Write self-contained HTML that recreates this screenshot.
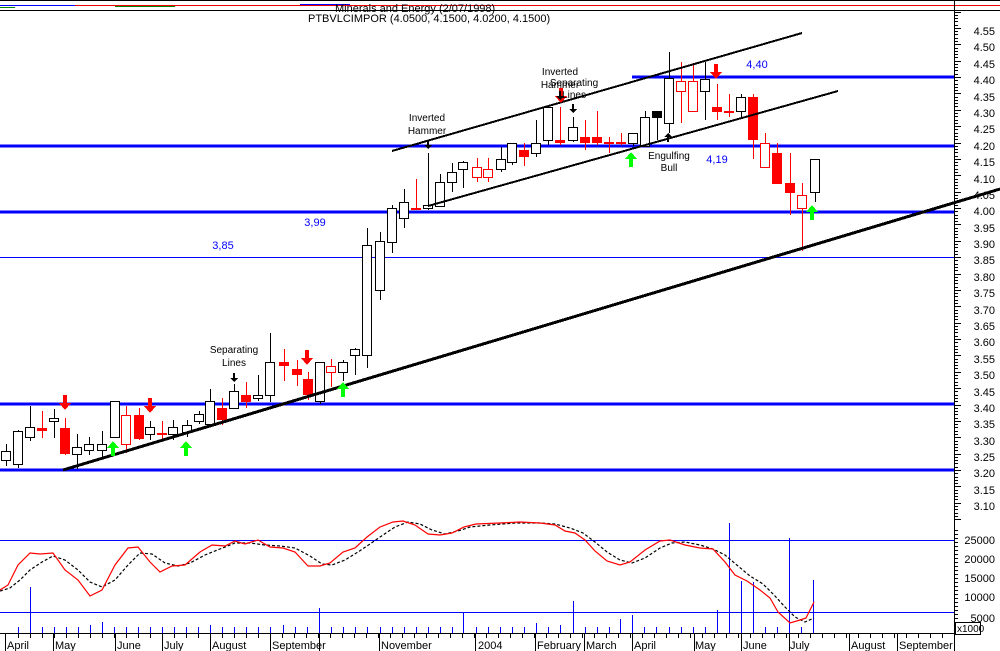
<!DOCTYPE html>
<html><head><meta charset="utf-8"><style>
html,body{margin:0;padding:0;background:#fff;}
svg{display:block;font-family:"Liberation Sans",Arial,sans-serif;}
</style></head><body>
<svg id="s" width="1000" height="651" viewBox="0 0 1000 651" xmlns="http://www.w3.org/2000/svg" shape-rendering="crispEdges">
<rect width="1000" height="651" fill="#fff"/>
<!-- header lines -->
<line x1="0" y1="0.5" x2="1000" y2="0.5" stroke="#000"/>
<line x1="0" y1="5.5" x2="1000" y2="5.5" stroke="#e00"/>
<line x1="0" y1="5.5" x2="75" y2="5.5" stroke="#00f"/>
<line x1="0" y1="7.5" x2="15" y2="7.5" stroke="#080"/>
<line x1="115" y1="6.5" x2="175" y2="6.5" stroke="#080"/>
<line x1="300" y1="4.5" x2="350" y2="4.5" stroke="#00f"/>
<line x1="0" y1="10.5" x2="1000" y2="10.5" stroke="#000"/>
<text x="335" y="12" font-size="11" fill="#000">Minerals and Energy (2/07/1998)</text>
<text x="308" y="22" font-size="11" fill="#000">PTBVLCIMPOR (4.0500, 4.1500, 4.0200, 4.1500)</text>
<g id="g"></g>
<!-- right axis -->
<line x1="954.5" y1="0" x2="954.5" y2="651" stroke="#000"/>
<g font-size="11" fill="#000" text-anchor="end">
<text x="995" y="35">4.55</text><text x="995" y="51">4.50</text><text x="995" y="68">4.45</text><text x="995" y="84">4.40</text><text x="995" y="101">4.35</text><text x="995" y="117">4.30</text><text x="995" y="133">4.25</text><text x="995" y="150">4.20</text><text x="995" y="166">4.15</text><text x="995" y="183">4.10</text><text x="995" y="199">4.05</text><text x="995" y="215">4.00</text><text x="995" y="232">3.95</text><text x="995" y="248">3.90</text><text x="995" y="264">3.85</text><text x="995" y="281">3.80</text><text x="995" y="297">3.75</text><text x="995" y="314">3.70</text><text x="995" y="330">3.65</text><text x="995" y="346">3.60</text><text x="995" y="363">3.55</text><text x="995" y="379">3.50</text><text x="995" y="396">3.45</text><text x="995" y="412">3.40</text><text x="995" y="428">3.35</text><text x="995" y="445">3.30</text><text x="995" y="461">3.25</text><text x="995" y="477">3.20</text><text x="995" y="494">3.15</text><text x="995" y="510">3.10</text>
<text x="995" y="544">25000</text><text x="995" y="563">20000</text><text x="995" y="582">15000</text><text x="995" y="601">10000</text><text x="995" y="622">5000</text>
</g>
<rect x="955.5" y="622.5" width="25" height="12" fill="#fff" stroke="#000"/>
<text x="957" y="632" font-size="10" fill="#000">x1000</text>
<!-- month labels -->
<g font-size="11" fill="#000">
<text x="7" y="649">April</text><text x="55" y="649">May</text><text x="117" y="649">June</text><text x="164" y="649">July</text><text x="212" y="649">August</text><text x="272" y="649">September</text><text x="381" y="649">November</text><text x="478" y="649">2004</text><text x="537" y="649">February</text><text x="586" y="649">March</text><text x="634" y="649">April</text><text x="695" y="649">May</text><text x="743" y="649">June</text><text x="790" y="649">July</text><text x="851" y="649">August</text><text x="899" y="649">September</text>
</g>
<!-- annotations -->
<g font-size="10" fill="#000" text-anchor="middle">
<text x="234" y="353">Separating</text><text x="234" y="366">Lines</text>
<text x="427" y="121">Inverted</text><text x="427" y="134">Hammer</text>
<text x="560" y="75">Inverted</text><text x="560" y="88">Hammer</text>
<text x="574" y="86">Separating</text><text x="574" y="98">Lines</text>
<text x="669" y="159">Engulfing</text><text x="669" y="171">Bull</text>
</g>
<g font-size="11" fill="#00f" text-anchor="middle">
<text x="757" y="68">4,40</text><text x="717" y="163">4,19</text><text x="315" y="226">3,99</text><text x="223" y="249">3,85</text>
</g>
</svg>
<script>
var g=document.getElementById('g'),NS='http://www.w3.org/2000/svg',h='';
function L(x1,y1,x2,y2,c,w,extra){h+='<line x1="'+x1+'" y1="'+y1+'" x2="'+x2+'" y2="'+y2+'" stroke="'+c+'" stroke-width="'+(w||1)+'" '+(extra||'')+'/>';}
// axis ticks
for(var i=0;i<=160;i++){var p=4.60-i*0.01;var y=Math.round(77+(4.40-p)/0.05*16.375)+0.5;if(y<11||y>520)continue;var mj=Math.abs(Math.round(p*100)%5)==0;L(954,y,mj?961:958,y,'#000');}
for(var y=530;y<=620;y+=4){L(954,y+0.5,958,y+0.5,'#000');}
// horizontal levels
L(0,257.5,954,257.5,'#00f',1);
L(0,404,954,404,'#00f',3);L(0,470,954,470,'#00f',3);L(0,212,954,212,'#00f',3);L(0,146,954,146,'#00f',3);L(632,77,954,77,'#00f',3);
L(0,540.5,954,540.5,'#00f',1);L(0,612.5,954,612.5,'#00f',1);
// candles [x,wt,wb,bt,bb,type]
var C=[[6,444,466,451,460,'w'],[18,430,468,431,464,'w'],[30,406,441,427,437,'w'],[42,411,438,428,430,'r'],[54,409,438,418,421,'w'],[65,418,455,428,453,'r'],[77,434,469,447,454,'w'],[89,437,455,444,450,'w'],[102,431,458,444,450,'w'],[115,401,438,401,437,'w'],[126,406,453,415,444,'o'],[139,408,440,415,438,'r'],[150,421,440,427,434,'w'],[162,421,440,433,434,'r'],[173,420,440,427,434,'w'],[187,420,437,425,432,'w'],[199,411,424,414,421,'w'],[210,389,424,401,424,'w'],[222,398,425,408,419,'r'],[234,384,408,391,408,'w'],[246,382,408,395,401,'r'],[258,375,401,395,398,'w'],[270,333,402,362,395,'w'],[284,349,381,362,365,'r'],[297,360,386,369,374,'r'],[308,372,400,379,394,'r'],[320,362,404,362,401,'w'],[331,359,387,366,372,'o'],[343,360,381,362,372,'w'],[355,348,375,349,355,'w'],[367,228,368,245,355,'w'],[380,232,300,241,290,'w'],[392,205,253,208,242,'w'],[404,189,228,202,218,'w'],[416,179,210,208,209,'r'],[428,153,210,205,208,'w'],[440,174,206,182,206,'w'],[452,163,192,172,182,'w'],[463,161,188,162,169,'w'],[477,158,182,167,177,'o'],[488,158,182,169,177,'o'],[501,147,172,159,169,'w'],[512,143,165,143,162,'w'],[524,143,166,150,156,'r'],[536,120,157,143,153,'w'],[548,107,145,107,140,'w'],[560,107,145,140,142,'r'],[573,117,142,127,140,'w'],[585,120,150,137,142,'r'],[597,111,145,137,142,'r'],[609,137,153,142,143,'r'],[621,133,145,142,143,'r'],[633,133,146,133,143,'w'],[645,111,146,117,146,'w'],[657,111,140,111,117,'b'],[669,52,133,78,123,'w'],[681,62,123,81,91,'o'],[693,63,111,81,111,'o'],[705,62,120,79,91,'w'],[717,84,120,107,111,'r'],[729,94,117,111,112,'r'],[741,94,117,97,111,'w'],[753,94,159,97,139,'r'],[765,133,167,143,167,'o'],[777,143,183,153,183,'r'],[790,153,215,183,192,'r'],[802,183,251,195,208,'o'],[815,159,202,159,192,'w']];
C.forEach(function(c){var x=c[0]+0.5,col=(c[5]=='w'||c[5]=='b')?'#000':'#f00';L(x,c[1],x,c[2],col);var bh=Math.max(c[4]-c[3],1);var fill=c[5]=='r'?'#f00':c[5]=='b'?'#000':'#fff';var cx=c[0]-4.5;if(c[5]=='r'&&bh<=2){h+='<rect x="'+(c[0]-5)+'" y="'+c[3]+'" width="10" height="'+(bh+1)+'" fill="#f00"/>';}else h+='<rect x="'+cx+'" y="'+(c[3]+0.5)+'" width="9" height="'+bh+'" fill="'+fill+'" stroke="'+col+'"/>';});
// trendlines
L(63,470,1000,189,'#000',3);L(392,151,802,33,'#000',2);L(428,206,838,91,'#000',2);
// arrows
function arr(x,y,c,down){ // y = tip
 var d=down?1:-1;var b=y-d*15;h+='<polygon points="'+(x-2)+','+b+' '+(x+2)+','+b+' '+(x+2)+','+(y-d*7)+' '+(x+6)+','+(y-d*7)+' '+x+','+y+' '+(x-6)+','+(y-d*7)+' '+(x-2)+','+(y-d*7)+'" fill="'+c+'"/>';}
[[65,410],[150,413],[307,365],[561,103],[716,79]].forEach(function(a){arr(a[0],a[1],'#f00',1);});
[[113,441],[186,441],[343,382],[631,152],[812,205]].forEach(function(a){arr(a[0],a[1],'#0f0',0);});
function sarr(x,y,down){var d=down?1:-1;h+='<polygon points="'+(x-1)+','+(y-d*9)+' '+(x+1)+','+(y-d*9)+' '+(x+1)+','+(y-d*4)+' '+(x+4)+','+(y-d*4)+' '+x+','+y+' '+(x-4)+','+(y-d*4)+' '+(x-1)+','+(y-d*4)+'" fill="#000"/>';}
sarr(234,382,1);sarr(428,149,1);sarr(573,113,1);sarr(668,133,0);sarr(560,100,1);
// volume
var V=[[18,627],[30,587],[42,627],[54,627],[66,627],[78,627],[90,625],[102,622],[114,627],[126,627],[138,627],[150,627],[162,627],[174,627],[186,627],[198,627],[210,625],[222,627],[234,627],[246,627],[258,627],[270,627],[283,625],[295,627],[307,627],[319,608],[331,627],[343,627],[355,627],[367,627],[380,627],[392,627],[404,627],[416,627],[428,627],[440,627],[452,627],[463,612],[476,627],[488,627],[500,627],[512,627],[524,627],[536,623],[548,627],[560,625],[573,601],[585,627],[597,627],[609,627],[620,619],[632,615],[644,627],[656,627],[669,627],[681,627],[693,627],[705,627],[717,610],[729,523],[741,581],[753,582],[765,627],[777,627],[789,538],[801,627],[813,580]];
V.forEach(function(v){L(v[0]+0.5,v[1],v[0]+0.5,633,'#00f');});
// month axis
L(0,633.5,954,633.5,'#000');
[5,53,115,162,210,270,319,379,475,535,584,632,694,741,789,849,897].forEach(function(x){L(x+0.5,633,x+0.5,651,'#000');});
for(var x=18;x<954;x+=12){L(x+0.5,633,x+0.5,638,'#000');}
// stochastics
var R=[[0,590],[8,585],[18,565],[30,553],[40,554],[53,553],[65,570],[78,580],[90,596],[102,590],[115,565],[128,548],[138,547],[150,562],[160,572],[172,566],[185,565],[200,552],[212,545],[225,546],[235,541],[245,544],[258,540],[270,547],[283,548],[295,552],[308,566],[320,566],[330,563],[343,552],[355,548],[367,537],[380,527],[393,522],[403,521],[415,525],[428,534],[440,535],[452,533],[464,527],[476,524],[500,523],[520,522],[540,523],[555,525],[565,531],[575,533],[585,540],[595,551],[607,561],[620,565],[630,562],[645,550],[660,541],[670,540],[685,545],[700,548],[713,549],[725,562],[735,575],[747,581],[760,590],[770,598],[778,612],[790,623],[800,620],[806,618],[814,602]];
var B=[[0,591],[10,588],[20,580],[30,570],[42,562],[53,556],[65,560],[78,570],[90,582],[102,587],[115,580],[128,565],[140,553],[152,554],[165,563],[178,566],[190,563],[205,555],[220,549],[235,543],[250,543],[265,545],[280,546],[295,548],[310,556],[322,564],[332,565],[345,560],[358,552],[370,544],[383,535],[395,527],[408,522],[420,524],[432,530],[445,534],[458,531],[470,527],[490,525],[515,523],[540,523],[555,524],[570,528],[583,533],[595,542],[607,552],[620,560],[632,563],[645,558],[660,548],[672,543],[685,542],[700,545],[713,549],[725,555],[738,566],[750,576],[763,584],[775,596],[785,607],[795,617],[805,622],[814,618]];
function pl(P,c,extra){h+='<polyline fill="none" stroke="'+c+'" stroke-width="1.2" shape-rendering="auto" '+(extra||'')+' points="'+P.map(function(p){return p.join(',')}).join(' ')+'"/>';}
pl(B,'#000','stroke-dasharray="3,2"');pl(R,'#f00');
g.innerHTML=h;
</script>
</body></html>
